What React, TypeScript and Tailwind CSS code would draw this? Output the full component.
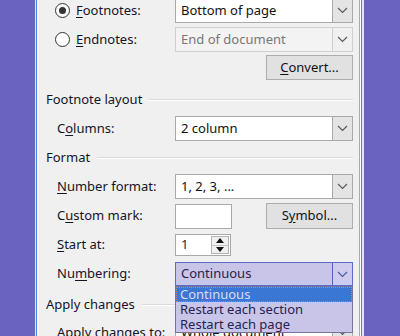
import React from 'react';
import clsx from 'clsx';

const Chevron = ({ color = '#5a5a5a' }: { color?: string }) => (
  <svg width="11" height="7" viewBox="0 0 11 7">
    <polyline points="1,1 5.5,5.5 10,1" fill="none" stroke={color} strokeWidth="1.2" />
  </svg>
);

// accelerator key underline
const Acc = ({ children }: { children: React.ReactNode }) => <span className="underline underline-offset-2">{children}</span>;

const Combo = ({ value, disabled, active }: { value: string; disabled?: boolean; active?: boolean }) => (
  <div
    className={clsx(
      'flex h-full w-[178px] border',
      disabled && 'border-[#cfcfcf] bg-[#f3f3f3] text-[#777777]',
      active && 'border-[#5c6cc6] bg-[#c9c5e9] text-[#26224f]',
      !disabled && !active && 'border-[#a9a9a9] bg-white text-[#111111]'
    )}
  >
    <div className="flex flex-1 items-center pl-[5px]">{value}</div>
    <div
      className={clsx(
        'flex w-[20px] items-center justify-center border-l',
        disabled && 'border-[#cfcfcf] bg-[#f0f0f0]',
        active && 'border-[#4f63c2] bg-[#cfcbef]',
        !disabled && !active && 'border-[#a9a9a9] bg-[#e4e4e4]'
      )}
    >
      <Chevron color={active ? '#4c5a9c' : '#5a5a5a'} />
    </div>
  </div>
);

const Button = ({ children }: { children: React.ReactNode }) => (
  <div className="ml-auto flex h-full w-[87px] items-center justify-center border border-[#adadad] bg-[#e1e1e1] text-[#111111]">
    {children}
  </div>
);

const Radio = ({ checked }: { checked?: boolean }) => (
  <div className="flex h-[15px] w-[15px] items-center justify-center rounded-full border border-[#333333] bg-white">
    {checked && <div className="h-[7px] w-[7px] rounded-full bg-[#333333]" />}
  </div>
);

const Heading = ({ title }: { title: string }) => (
  <div className="flex h-[20px] items-center">
    <span className="text-[#141428]">{title}</span>
    <div className="ml-[7px] flex-1 border-t border-b border-t-[#dadada] border-b-white" />
  </div>
);

const Label = ({ children }: { children: React.ReactNode }) => (
  <div className="flex w-[129px] items-center pl-[11px] text-[#141428]">{children}</div>
);

export default function App() {
  return (
    <div className="flex h-[336px] w-[400px] overflow-hidden bg-[#6b63c0] font-['Noto_Sans',sans-serif] text-[13px]">
      <div className="w-[35px]" />
      <div className="w-px bg-[#e6e6ee]" />
      <div className="w-px bg-[#3f8be0]" />
      <div className="w-[2px] bg-[#f6f6f6]" />

      <div className="flex w-[320px] flex-col bg-[#f0f0f0] pl-[7px] pr-[6px]">
        {/* Footnotes */}
        <div className="mt-[-2px] flex h-[25px] shrink-0">
          <div className="flex w-[129px] items-center gap-[6px] pl-[9px] text-[#141428]">
            <Radio checked />
            <span><Acc>F</Acc>ootnotes:</span>
          </div>
          <Combo value="Bottom of page" />
        </div>

        {/* Endnotes */}
        <div className="mt-[4px] flex h-[25px] shrink-0">
          <div className="flex w-[129px] items-center gap-[6px] pl-[9px] text-[#141428]">
            <Radio />
            <span><Acc>E</Acc>ndnotes:</span>
          </div>
          <Combo value="End of document" disabled />
        </div>

        <div className="mt-[3px] flex h-[25px] shrink-0">
          <Button><span><Acc>C</Acc>onvert...</span></Button>
        </div>

        <div className="mt-[10px] shrink-0">
          <Heading title="Footnote layout" />
        </div>

        <div className="mt-[6px] flex h-[25px] shrink-0">
          <Label><span>C<Acc>o</Acc>lumns:</span></Label>
          <Combo value="2 column" />
        </div>

        <div className="mt-[7px] shrink-0">
          <Heading title="Format" />
        </div>

        <div className="mt-[6px] flex h-[25px] shrink-0">
          <Label><span><Acc>N</Acc>umber format:</span></Label>
          <Combo value="1, 2, 3, ..." />
        </div>

        <div className="mt-[4px] flex h-[26px] shrink-0 items-center">
          <Label><span>C<Acc>u</Acc>stom mark:</span></Label>
          <div className="h-[25px] w-[57px] border border-[#a9a9a9] bg-white" />
          <div className="ml-auto flex h-[26px]">
            <Button><span>S<Acc>y</Acc>mbol...</span></Button>
          </div>
        </div>

        <div className="mt-[5px] flex h-[22px] shrink-0">
          <Label><span><Acc>S</Acc>tart at:</span></Label>
          <div className="flex h-full w-[56px] border border-[#a9a9a9] bg-white">
            <div className="flex flex-1 items-center pl-[5px] text-[#26224f]">1</div>
            <div className="my-[1px] mr-[1px] flex w-[18px] flex-col border border-[#b4b4b4] bg-[#f0f0f0]">
              <div className="flex flex-1 items-center justify-center border-b border-[#c4c4c4]">
                <svg width="8" height="5" viewBox="0 0 8 5"><polygon points="4,0 8,5 0,5" fill="#111" /></svg>
              </div>
              <div className="flex flex-1 items-center justify-center">
                <svg width="8" height="5" viewBox="0 0 8 5"><polygon points="0,0 8,0 4,5" fill="#111" /></svg>
              </div>
            </div>
          </div>
        </div>

        <div className="mt-[6px] flex h-[24px] shrink-0">
          <Label><span>Nu<Acc>m</Acc>bering:</span></Label>
          <div className="relative">
            <Combo value="Continuous" active />
            {/* open dropdown list */}
            <div className="absolute left-0 top-full z-10 flex w-[178px] flex-col border border-[#77739f] bg-[#c9c5e9] text-[#26224f]">
              <div className="flex h-[15px] items-center border border-dotted border-[#c9846a] bg-[#3a77d5] pl-[3px] text-[#dcd9f7]">Continuous</div>
              <div className="flex h-[15px] items-center pl-[4px]">Restart each section</div>
              <div className="flex h-[15px] items-center pl-[4px]">Restart each page</div>
            </div>
          </div>
        </div>

        <div className="mt-[9px] shrink-0">
          <Heading title="Apply changes" />
        </div>

        <div className="mt-[5px] flex h-[25px] shrink-0">
          <Label><span>A<Acc>p</Acc>ply changes to:</span></Label>
          <Combo value="Whole document" />
        </div>
      </div>

      <div className="w-px bg-[#a9a9a9]" />
      <div className="w-px bg-white" />
      <div className="w-px bg-[#3f8be0]" />
      <div className="w-[2px] bg-[#e6e6ee]" />
      <div className="flex-1" />
    </div>
  );
}
